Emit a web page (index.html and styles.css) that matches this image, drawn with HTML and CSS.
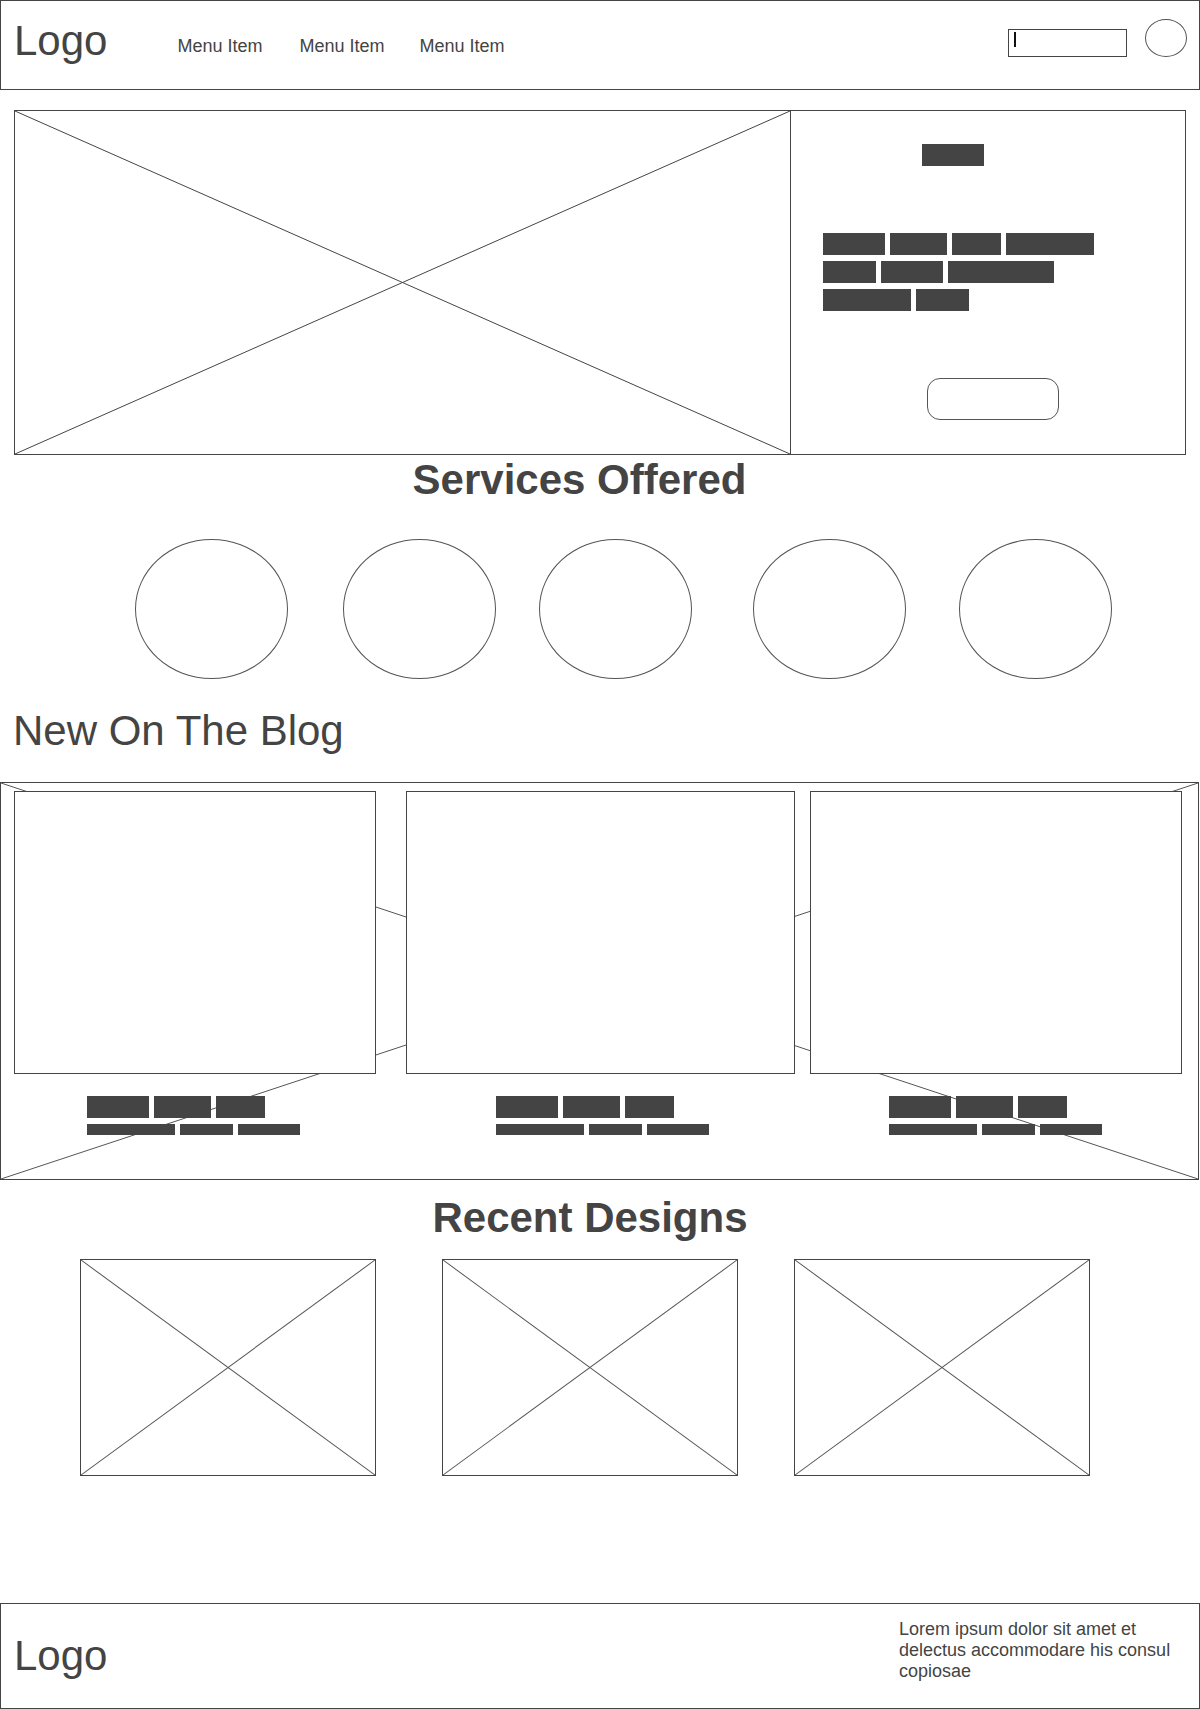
FILE: index.html
```html
<!DOCTYPE html>
<html lang="en">
<head>
<meta charset="utf-8">
<title>Wireframe</title>
<link rel="stylesheet" href="styles.css">
</head>
<body>
<header class="topbar">
  <div class="logo">Logo</div>
  <nav class="menu">
    <span class="menu-item">Menu Item</span>
    <span class="menu-item">Menu Item</span>
    <span class="menu-item">Menu Item</span>
  </nav>
  <div class="search"><span class="caret"></span></div>
  <div class="avatar"></div>
</header>

<section class="hero">
  <div class="hero-img">
    <svg class="xfill" viewBox="0 0 100 100" preserveAspectRatio="none">
      <line x1="0" y1="0" x2="100" y2="100"/>
      <line x1="0" y1="100" x2="100" y2="0"/>
    </svg>
  </div>
  <div class="hero-panel">
    <div class="blk title-blk"></div>
    <div class="rows">
      <div class="row"><span class="blk w62"></span><span class="blk w57"></span><span class="blk w49"></span><span class="blk w88"></span></div>
      <div class="row"><span class="blk w53"></span><span class="blk w62"></span><span class="blk w106"></span></div>
      <div class="row"><span class="blk w88"></span><span class="blk w53"></span></div>
    </div>
    <div class="btn"></div>
  </div>
</section>

<h2 class="section-title services-title">Services Offered</h2>

<div class="services">
  <div class="service"></div>
  <div class="service"></div>
  <div class="service"></div>
  <div class="service"></div>
  <div class="service"></div>
</div>

<h2 class="blog-title">New On The Blog</h2>

<section class="blog">
  <svg class="blog-bg" viewBox="0 0 100 100" preserveAspectRatio="none">
    <line x1="0" y1="0" x2="100" y2="100"/>
    <line x1="0" y1="100" x2="100" y2="0"/>
  </svg>
  <div class="post post1">
    <div class="card"></div>
    <div class="meta">
      <div class="row"><span class="blk w62"></span><span class="blk w57"></span><span class="blk w49"></span></div>
      <div class="row thin"><span class="blk w88"></span><span class="blk w53"></span><span class="blk w62"></span></div>
    </div>
  </div>
  <div class="post post2">
    <div class="card"></div>
    <div class="meta">
      <div class="row"><span class="blk w62"></span><span class="blk w57"></span><span class="blk w49"></span></div>
      <div class="row thin"><span class="blk w88"></span><span class="blk w53"></span><span class="blk w62"></span></div>
    </div>
  </div>
  <div class="post post3">
    <div class="card"></div>
    <div class="meta">
      <div class="row"><span class="blk w62"></span><span class="blk w57"></span><span class="blk w49"></span></div>
      <div class="row thin"><span class="blk w88"></span><span class="blk w53"></span><span class="blk w62"></span></div>
    </div>
  </div>
</section>

<h2 class="section-title recent-title">Recent Designs</h2>

<div class="designs">
  <div class="design">
    <svg class="xfill" viewBox="0 0 100 100" preserveAspectRatio="none">
      <line x1="0" y1="0" x2="100" y2="100"/>
      <line x1="0" y1="100" x2="100" y2="0"/>
    </svg>
  </div>
  <div class="design">
    <svg class="xfill" viewBox="0 0 100 100" preserveAspectRatio="none">
      <line x1="0" y1="0" x2="100" y2="100"/>
      <line x1="0" y1="100" x2="100" y2="0"/>
    </svg>
  </div>
  <div class="design">
    <svg class="xfill" viewBox="0 0 100 100" preserveAspectRatio="none">
      <line x1="0" y1="0" x2="100" y2="100"/>
      <line x1="0" y1="100" x2="100" y2="0"/>
    </svg>
  </div>
</div>

<footer class="footer">
  <div class="logo">Logo</div>
  <p class="footer-text">Lorem ipsum dolor sit amet et delectus accommodare his consul copiosae</p>
</footer>
</body>
</html>
```

FILE: styles.css
```css
* {
  box-sizing: border-box;
}

html, body {
  margin: 0;
  padding: 0;
  background: #ffffff;
}

body {
  width: 1200px;
  font-family: "Liberation Sans", Arial, sans-serif;
  color: #444444;
}

/* ---------- header ---------- */
.topbar {
  display: flex;
  align-items: flex-start;
  width: 1200px;
  height: 90px;
  border: 1px solid #444444;
  padding: 0 12px 0 13px;
}

.logo {
  font-size: 42px;
  line-height: 48px;
  color: #444444;
}

.topbar .logo {
  margin-top: 16px;
}

.menu {
  display: flex;
  margin-top: 35px;
  margin-left: 70px;
}

.menu-item {
  font-size: 18px;
  line-height: 20px;
  color: #444444;
}

.menu-item:nth-child(2) {
  margin-left: 37px;
}

.menu-item:nth-child(3) {
  margin-left: 35px;
}

.search {
  position: relative;
  margin-left: auto;
  margin-top: 28px;
  width: 119px;
  height: 28px;
  border: 1px solid #444444;
}

.caret {
  position: absolute;
  left: 5px;
  top: 2px;
  width: 2px;
  height: 15px;
  background: #111111;
}

.avatar {
  margin-top: 18px;
  margin-left: 18px;
  width: 42px;
  height: 38px;
  border: 1px solid #555555;
  border-radius: 50%;
}

/* ---------- hero ---------- */
.hero {
  display: flex;
  margin: 20px 0 0 14px;
  width: 1172px;
  height: 345px;
  border: 1px solid #444444;
}

.hero-img {
  width: 776px;
  height: 100%;
  border-right: 1px solid #444444;
}

.xfill {
  display: block;
  width: 100%;
  height: 100%;
}

.xfill line,
.blog-bg line {
  stroke: #444444;
  stroke-width: 1;
  vector-effect: non-scaling-stroke;
}

.hero-panel {
  display: flex;
  flex-direction: column;
  align-items: flex-start;
  padding-left: 32px;
}

.blk {
  display: block;
  height: 22px;
  background: #444444;
}

.title-blk {
  width: 62px;
  margin-top: 33px;
  margin-left: 99px;
}

.rows {
  display: flex;
  flex-direction: column;
  gap: 6px;
  margin-top: 67px;
}

.row {
  display: flex;
  gap: 5px;
}

.w49 { width: 49px; }
.w53 { width: 53px; }
.w57 { width: 57px; }
.w62 { width: 62px; }
.w88 { width: 88px; }
.w106 { width: 106px; }

.btn {
  margin-top: 67px;
  margin-left: 104px;
  width: 132px;
  height: 42px;
  border: 1px solid #555555;
  border-radius: 13px;
}

/* ---------- headings ---------- */
.section-title {
  margin: 0;
  font-size: 42px;
  line-height: 48px;
  font-weight: bold;
  text-align: center;
  color: #444444;
}

.services-title {
  margin-top: 1px;
  padding-right: 41px;
}

.recent-title {
  margin-top: 14px;
  padding-right: 20px;
}

.blog-title {
  margin: 28px 0 0 0;
  padding-left: 13px;
  font-size: 42px;
  line-height: 48px;
  font-weight: normal;
  color: #444444;
}

/* ---------- services ---------- */
.services {
  display: flex;
  margin-top: 35px;
  padding-left: 135px;
}

.service {
  width: 153px;
  height: 140px;
  border: 1px solid #555555;
  border-radius: 50%;
}

.service:nth-child(2) { margin-left: 55px; }
.service:nth-child(3) { margin-left: 43px; }
.service:nth-child(4) { margin-left: 61px; }
.service:nth-child(5) { margin-left: 53px; }

/* ---------- blog ---------- */
.blog {
  position: relative;
  display: flex;
  align-items: flex-start;
  margin-top: 27px;
  width: 1199px;
  height: 398px;
  border: 1px solid #444444;
  padding: 8px 0 0 13px;
}

.blog-bg {
  position: absolute;
  left: 0;
  top: 0;
  width: 100%;
  height: 100%;
}

.blog-bg line {
  stroke: #555555;
}

.post {
  position: relative;
  display: flex;
  flex-direction: column;
}

.post1 { width: 362px; }
.post2 { width: 389px; margin-left: 30px; }
.post3 { width: 372px; margin-left: 15px; }

.card {
  width: 100%;
  height: 283px;
  border: 1px solid #444444;
  background: #ffffff;
}

.meta {
  display: flex;
  flex-direction: column;
  gap: 6px;
  align-self: center;
  width: 213px;
  margin-top: 22px;
}

.post1 .meta { margin-right: 3px; }
.post2 .meta { margin-left: 3px; }
.post3 .meta { margin-right: 2px; }

.row.thin .blk {
  height: 11px;
}

/* ---------- designs ---------- */
.designs {
  display: flex;
  margin-top: 17px;
  padding-left: 80px;
}

.design {
  width: 296px;
  height: 217px;
  border: 1px solid #444444;
}

.design:nth-child(2) { margin-left: 66px; }
.design:nth-child(3) { margin-left: 56px; }

.design .xfill line {
  stroke: #555555;
}

/* ---------- footer ---------- */
.footer {
  display: flex;
  align-items: center;
  margin-top: 127px;
  width: 1200px;
  height: 106px;
  border: 1px solid #444444;
  padding: 0 14px 0 13px;
}

.footer-text {
  margin: 0 0 12px auto;
  width: 286px;
  font-size: 18px;
  line-height: 21px;
  color: #444444;
}
```
